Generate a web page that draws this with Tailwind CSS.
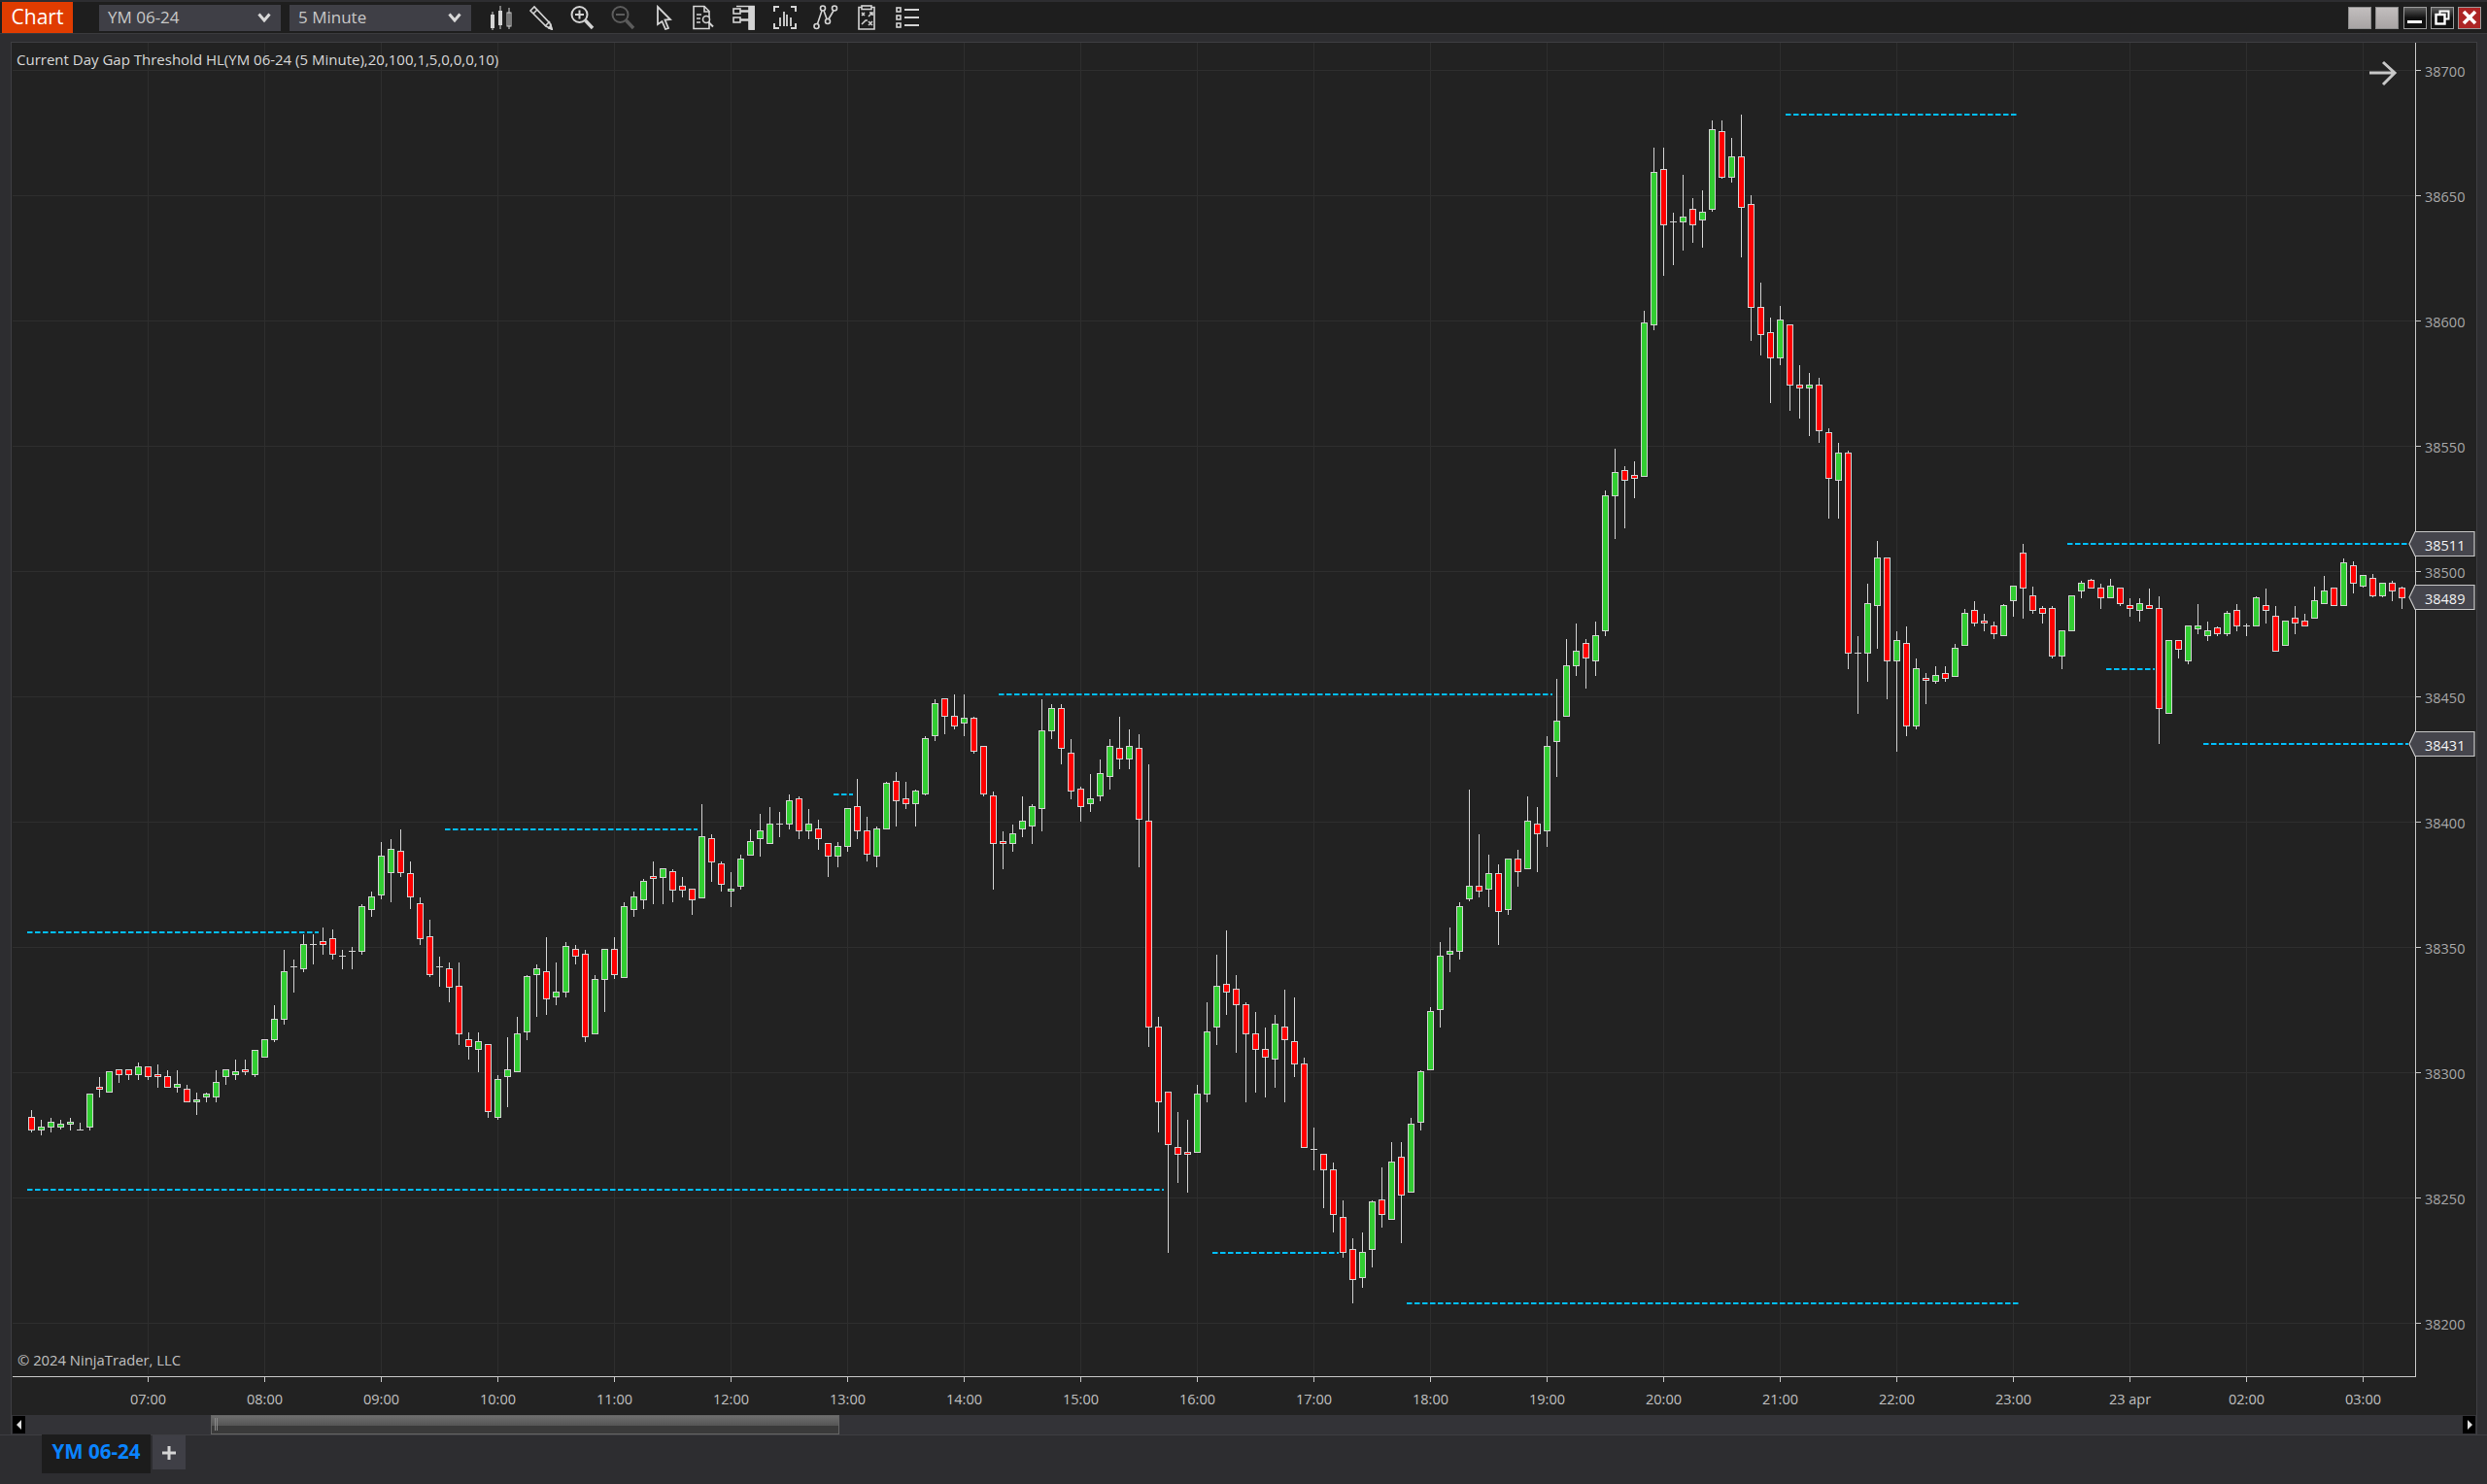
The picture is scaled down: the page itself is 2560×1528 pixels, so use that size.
<!DOCTYPE html>
<html lang="en">
  <head>
    <meta charset="UTF-8" />
    <title>Chart - YM 06-24</title>
    <script src="https://cdn.jsdelivr.net/npm/@tailwindcss/browser@4"></script>
  </head>
  <body class="m-0 p-0 bg-[#2d2d30] overflow-hidden">
    <div class="w-[2560px] h-[1528px] flex flex-col bg-[#2d2d30] font-['Open_Sans',sans-serif] text-[#d4d4d4]">
      <!-- Toolbar -->
      <header class="h-[32px] mt-[2px] bg-[#1e1e1e] flex items-center shrink-0 relative">
        <div class="w-[73px] h-[32px] ml-[2px] bg-[#e03c00] text-white text-[21px] flex items-center justify-center">Chart</div>
        <div class="w-[187px] h-[27px] ml-[27px] bg-[#3f3f46] flex items-center justify-between pl-[9px] pr-[10px] text-[17px] text-[#c8c8c8]">
          <span>YM 06-24</span>
          <svg width="14" height="10" viewBox="0 0 14 10"><path d="M1.5 1.5 L7 8 L12.5 1.5" fill="none" stroke="#d8d8d8" stroke-width="3"/></svg>
        </div>
        <div class="w-[187px] h-[27px] ml-[9px] bg-[#3f3f46] flex items-center justify-between pl-[9px] pr-[10px] text-[17px] text-[#c8c8c8]">
          <span>5 Minute</span>
          <svg width="14" height="10" viewBox="0 0 14 10"><path d="M1.5 1.5 L7 8 L12.5 1.5" fill="none" stroke="#d8d8d8" stroke-width="3"/></svg>
        </div>
        <!-- Chart tool icons -->
        <div class="flex items-center ml-[17px] gap-[15.9px]">
          <!-- bars type -->
          <svg width="26" height="26" viewBox="0 0 26 26" fill="#d4d4d4"><rect x="3" y="10" width="4" height="14"/><rect x="4.5" y="7" width="1" height="19"/><rect x="11" y="6" width="4" height="15"/><rect x="12.5" y="1" width="1" height="24"/><rect x="20" y="8" width="4" height="14" fill="none" stroke="#d4d4d4"/><rect x="21.5" y="3" width="1" height="22"/></svg>
          <!-- pencil -->
          <svg width="26" height="26" viewBox="0 0 26 26" fill="none" stroke="#d4d4d4" stroke-width="1.6"><path d="M2 6 L6 2 L22 19 L24 25 L18 22 Z"/><path d="M5 9 L9 5"/><path d="M17 22 L22 17"/><path d="M21 24 L24 25 L23 21 Z" fill="#d4d4d4"/></svg>
          <!-- zoom in -->
          <svg width="26" height="26" viewBox="0 0 26 26" fill="none" stroke="#d4d4d4"><circle cx="10.5" cy="10" r="8" stroke-width="2"/><path d="M6 10 H15 M10.5 5.5 V14.5" stroke-width="2"/><path d="M16.5 16 L24 24" stroke-width="3.4"/></svg>
          <!-- zoom out, disabled -->
          <svg width="26" height="26" viewBox="0 0 26 26" fill="none" stroke="#5c5c5c"><circle cx="10.5" cy="10" r="8" stroke-width="2"/><path d="M6 10 H15" stroke-width="2"/><path d="M16.5 16 L24 24" stroke-width="3.4"/></svg>
          <!-- cursor -->
          <svg width="26" height="26" viewBox="0 0 26 26" fill="none" stroke="#d4d4d4" stroke-width="1.8"><path d="M7 2 L20 15 L14.5 15.5 L18 24 L15 25 L11.5 17 L7 20 Z"/></svg>
          <!-- data box -->
          <svg width="26" height="26" viewBox="0 0 26 26" fill="none" stroke="#d4d4d4" stroke-width="1.6"><path d="M3 1.5 H14 L19 6.5 V24.5 H3 Z"/><path d="M14 1.5 V7 H19"/><path d="M6 10 H11 M6 14 H10 M6 18 H10" /><circle cx="16" cy="15" r="3.5" fill="#1e1e1e"/><path d="M18.5 18 L23 22.5" stroke-width="2"/></svg>
          <!-- properties -->
          <svg width="26" height="26" viewBox="0 0 26 26" fill="none" stroke="#d4d4d4" stroke-width="1.6"><rect x="2" y="4" width="7" height="5"/><rect x="2" y="13" width="7" height="5"/><path d="M9 6.5 H18 M9 15.5 H18" stroke-width="2.4"/><path d="M5 1.5 H23 V25 H19 V1.5" /><rect x="18" y="2" width="5" height="23" fill="#d4d4d4"/></svg>
          <!-- indicators -->
          <svg width="26" height="26" viewBox="0 0 26 26" fill="none" stroke="#d4d4d4" stroke-width="2"><path d="M7 2 H2 V7 M19 2 H24 V7 M2 19 V24 H7 M24 19 V24 H19"/><path d="M8 13 V22 M12 7 V22 M15 10 V22 M19 13 V22" stroke-width="1.8"/></svg>
          <!-- strategies line -->
          <svg width="26" height="26" viewBox="0 0 26 26" fill="none" stroke="#d4d4d4" stroke-width="1.6"><circle cx="3.5" cy="22" r="2.5"/><circle cx="10" cy="3.5" r="2.5"/><circle cx="15" cy="17" r="2.5"/><circle cx="22" cy="3.5" r="2.5"/><path d="M4.5 19.5 L9 6 M11 6 L14 14.5 M16 14.5 L21 6"/></svg>
          <!-- strategy sheet -->
          <svg width="26" height="26" viewBox="0 0 26 26" fill="none" stroke="#d4d4d4" stroke-width="1.6"><path d="M8 2.5 H5 V25 H21 V2.5 H18"/><rect x="8" y="1" width="10" height="3.5"/><path d="M8 8 L11 11 M11 8 L8 11 M15 12 L19 8 M16 8 H19 V11 M8 20 L12 16 H14 M15 17 L19 21 M19 17 L15 21"/></svg>
          <!-- list -->
          <svg width="26" height="26" viewBox="0 0 26 26" fill="none" stroke="#d4d4d4" stroke-width="1.6"><rect x="2" y="3" width="4" height="4"/><rect x="2" y="11" width="4" height="4"/><rect x="2" y="19" width="4" height="4"/><path d="M10 5 H25 M10 13 H25 M10 21 H25" stroke-width="2.2"/></svg>
        </div>
        <!-- Window buttons -->
        <div class="ml-auto mr-[6px] flex items-center gap-[4.2px]">
          <div class="w-[24px] h-[23px] bg-gradient-to-b from-[#c2bebe] to-[#a8a4a4] border border-[#8c8c8c]"></div>
          <div class="w-[24px] h-[23px] bg-gradient-to-b from-[#c2bebe] to-[#a8a4a4] border border-[#8c8c8c]"></div>
          <div class="w-[24px] h-[23px] bg-gradient-to-b from-[#5c5c5c] via-[#111111] to-[#111111] border border-[#9a9a9a] flex items-end justify-center pb-[5px]"><div class="w-[15px] h-[3px] bg-white"></div></div>
          <div class="w-[24px] h-[23px] bg-gradient-to-b from-[#5c5c5c] via-[#111111] to-[#111111] border border-[#9a9a9a] flex items-center justify-center">
            <svg width="16" height="16" viewBox="0 0 16 16" fill="none" stroke="#fff"><rect x="5.5" y="1.5" width="9" height="8" stroke-width="2"/><rect x="1.5" y="5" width="9" height="9.5" fill="#111" stroke-width="2.4"/></svg>
          </div>
          <div class="w-[24px] h-[23px] bg-[#ad2525] border border-[#9a9a9a] flex items-center justify-center">
            <svg width="16" height="16" viewBox="0 0 16 16" fill="none" stroke="#fff" stroke-width="3.6"><path d="M2 2 L14 14 M14 2 L2 14"/></svg>
          </div>
        </div>
      </header>

      <!-- Chart frame -->
      <main class="h-[1443px] shrink-0 border-t border-[#3a3a3d] pt-[8px] pl-[11px] pr-[10px] flex flex-col">
        <div class="border border-b-0 border-[#3e3e42] flex flex-col w-[2539px] h-[1434px]">
          <svg id="chart" class="block bg-[#222222]" width="2537" height="1413" viewBox="12 44 2537 1413"></svg>
          <!-- Scrollbar -->
          <div class="h-[20px] bg-[#333337] flex items-stretch shrink-0 relative">
            <div class="w-[13px] my-px ml-px bg-black flex items-center justify-center">
              <svg width="6" height="10" viewBox="0 0 6 10"><path d="M5 0 V10 L0 5 Z" fill="#e0e0e0"/></svg>
            </div>
            <div class="ml-[191px] w-[647px] border border-[#666666] bg-[#3a3a3a] flex flex-col relative">
              <div class="h-[10px] bg-gradient-to-b from-[#6e6e6e] to-[#555555]"></div>
              <div class="absolute left-[3px] top-[2px] w-[3px] h-[13px] border-x border-[#8a8a8a]"></div>
            </div>
            <div class="ml-auto w-[13px] my-px mr-px bg-black flex items-center justify-center">
              <svg width="6" height="10" viewBox="0 0 6 10"><path d="M1 0 V10 L6 5 Z" fill="#e0e0e0"/></svg>
            </div>
          </div>
        </div>
      </main>

      <!-- Tabs -->
      <nav class="border-t border-[#3e3e42] h-[50px] shrink-0 flex items-start pl-[43px]">
        <div class="-mt-px w-[112px] h-[40px] pb-[5px] bg-[#1c1c1c] text-[#0a84ff] text-[20.5px] font-bold flex items-center justify-center">YM 06-24</div>
        <div class="ml-[2px] w-[34px] h-[35px] bg-[#3f3f46] flex items-center justify-center">
          <svg width="16" height="16" viewBox="0 0 16 16"><path d="M8 1 V15 M1 8 H15" stroke="#d4d4d4" stroke-width="3"/></svg>
        </div>
      </nav>
    </div>

    <script>
      // hi, body top, body bottom, lo in page pixels; r = down, g = up, d = doji
      const bars = `r 1143 1150 1163 1166|g 1153 1160 1163 1169|g 1151 1155 1160 1166|g 1153 1157 1160 1163|g 1151 1155 1157 1164|d 1156 1163 1163 1164|g 1126 1126 1160 1164|r 1109 1119 1121 1130|g 1103 1103 1124 1124|r 1101 1101 1106 1115|r 1101 1101 1106 1112|g 1094 1098 1106 1112|r 1098 1098 1108 1112|r 1096 1106 1108 1120|r 1102 1108 1119 1119|g 1102 1116 1119 1125|r 1117 1121 1134 1134|g 1125 1132 1134 1148|g 1125 1126 1129 1135|g 1102 1114 1129 1135|g 1101 1101 1108 1117|g 1091 1103 1106 1112|r 1091 1101 1103 1107|g 1081 1081 1106 1109|g 1070 1070 1088 1088|g 1035 1049 1070 1073|g 978 1000 1049 1055|d 988 995 995 1022|g 962 972 997 1001|d 962 972 972 993|r 955 969 972 983|r 957 966 982 988|d 978 984 984 998|d 975 979 979 998|g 931 933 979 983|g 918 923 936 944|g 867 881 921 926|g 864 874 898 929|r 854 876 898 903|r 887 899 923 936|r 924 930 966 973|r 947 964 1003 1006|d 985 995 995 1016|r 991 997 1016 1032|r 991 1015 1064 1076|r 1063 1070 1077 1091|g 1063 1072 1080 1104|r 1075 1075 1144 1151|g 1107 1111 1150 1153|g 1068 1101 1108 1140|g 1047 1064 1103 1103|g 1004 1005 1062 1071|g 993 997 1003 1047|r 965 1000 1028 1045|g 991 1021 1026 1035|g 970 974 1021 1027|r 973 977 984 993|r 978 982 1067 1073|g 1004 1008 1064 1064|g 977 977 1008 1042|r 965 977 1003 1008|g 929 933 1006 1006|g 918 923 936 944|g 905 907 926 936|r 887 902 904 931|g 894 894 903 931|r 895 897 916 929|r 903 912 916 924|r 915 915 926 942|g 828 861 924 924|r 859 863 887 908|r 887 889 910 918|g 898 915 917 934|g 880 884 912 916|g 854 866 880 880|g 838 855 863 882|g 831 848 868 868|d 836 848 848 862|g 818 824 848 854|r 820 822 855 864|g 833 848 855 864|r 844 853 863 875|r 868 868 881 903|g 867 871 881 893|g 832 832 871 877|r 802 830 855 864|r 841 855 879 887|g 851 853 881 893|g 805 806 853 853|r 795 804 824 851|r 805 822 827 833|g 813 814 827 851|g 758 760 817 819|g 720 724 757 763|r 719 719 737 756|r 715 737 747 751|g 715 739 744 758|r 738 739 773 776|r 768 768 817 820|r 815 819 868 916|r 856 866 868 895|g 849 858 868 877|g 820 845 853 862|g 828 830 850 869|g 720 752 832 856|g 725 729 752 761|r 725 729 770 787|r 761 775 814 823|r 810 812 830 846|g 797 822 827 836|g 782 796 819 825|g 761 768 799 813|r 738 770 781 792|g 751 768 781 792|r 756 770 843 893|r 787 845 1057 1078|r 1047 1057 1134 1166|r 1124 1124 1178 1290|r 1145 1181 1188 1218|r 1153 1186 1188 1228|g 1117 1126 1186 1186|g 1032 1062 1126 1135|g 983 1015 1057 1076|r 958 1013 1021 1045|r 1004 1018 1034 1084|r 1032 1034 1064 1135|r 1042 1064 1080 1125|r 1058 1080 1088 1130|g 1045 1054 1090 1120|r 1019 1057 1070 1135|r 1027 1072 1095 1109|r 1089 1095 1181 1181|d 1161 1183 1183 1205|r 1188 1188 1204 1244|r 1197 1204 1250 1269|r 1236 1253 1289 1295|r 1275 1286 1317 1342|g 1269 1289 1315 1326|g 1236 1237 1286 1305|r 1202 1235 1250 1264|g 1176 1196 1255 1255|r 1176 1191 1230 1280|g 1151 1157 1227 1227|g 1102 1103 1155 1164|g 1037 1041 1101 1101|g 970 984 1039 1058|g 955 979 982 1001|g 929 933 979 988|g 813 912 925 928|r 859 912 917 924|g 880 899 915 934|r 890 899 938 973|g 884 884 936 942|r 875 884 897 913|g 820 845 894 894|r 831 848 858 898|g 758 768 855 872|g 699 742 763 800|g 658 685 737 737|g 642 670 685 696|r 658 662 677 709|g 640 654 680 696|g 505 510 649 655|g 462 486 510 555|r 480 484 494 544|r 475 489 492 513|g 320 332 490 490|g 152 177 334 340|r 152 174 231 284|d 219 228 228 273|g 180 223 228 258|r 204 215 231 250|g 196 218 226 255|g 124 133 215 218|r 124 135 182 184|g 142 161 182 188|r 118 161 213 265|r 201 210 316 351|r 291 316 344 366|r 327 342 368 415|g 315 329 368 376|r 334 334 396 423|r 376 396 399 431|g 384 396 399 449|r 389 396 443 456|r 441 445 492 534|g 456 466 494 534|r 464 466 672 689|d 655 672 672 735|g 601 621 672 702|g 557 574 623 668|r 574 574 680 720|g 650 659 680 774|r 645 662 747 758|g 678 688 747 751|r 693 698 698 725|g 686 695 701 704|r 686 693 698 702|g 663 667 696 696|g 627 631 664 664|r 619 628 641 645|r 632 639 641 650|r 640 644 652 658|g 622 623 654 654|g 603 603 618 635|r 560 569 605 637|r 604 613 628 632|r 624 626 631 642|r 624 626 675 678|g 649 649 675 689|g 613 613 649 649|g 598 600 608 616|r 596 597 605 605|r 601 605 615 627|g 596 603 615 615|r 605 605 621 624|r 616 623 626 635|g 616 621 628 640|r 606 623 626 626|r 614 626 729 766|g 659 659 734 734|r 659 659 668 678|g 644 644 680 684|g 622 644 647 653|g 640 649 654 660|r 645 646 652 655|g 629 631 652 655|r 622 628 644 650|d 642 644 644 655|g 614 615 644 644|r 606 623 628 642|r 624 634 670 670|g 639 639 664 664|r 624 636 641 653|r 632 639 644 644|g 604 618 636 636|g 593 608 621 621|r 605 605 623 623|g 575 579 623 623|r 578 582 600 611|g 592 592 603 605|r 591 595 613 615|g 600 600 613 615|r 598 600 608 619|r 604 605 615 627`.split('|');

      // dashed threshold lines: y, x1, x2
      const gaps = [[960,28,328],[1225,28,1198],[854,458,718],[818,858,878],[715,1028,1598],[1290,1248,1378],[1342,1448,2078],[118,1838,2078],[560,2128,2479],[689,2168,2218],[766,2268,2479]];
      const hours = ['07:00','08:00','09:00','10:00','11:00','12:00','13:00','14:00','15:00','16:00','17:00','18:00','19:00','20:00','21:00','22:00','23:00','23 apr','02:00','03:00'];
      const prices = [38700,38650,38600,38550,38500,38450,38400,38350,38300,38250,38200];
      const tags = [[560,'38511'],[615,'38489'],[766,'38431']];
      const axis = '#c8c8c8', grid = '#2e2e2e', ink = '#d2d2d2';
      const font = 'font-family="Open Sans, sans-serif"';
      let s = '';

      // grid
      hours.forEach((h, i) => {
        const x = 152.5 + 120 * i;
        s += `<line x1="${x}" x2="${x}" y1="44" y2="1415" stroke="${grid}"/>`;
      });
      prices.forEach((p, i) => {
        const y = 72.5 + 129 * i;
        s += `<line x1="13" x2="2486" y1="${y}" y2="${y}" stroke="${grid}"/>`;
      });

      // dashed lines under the candles
      gaps.forEach(([y, a, b]) => {
        s += `<line x1="${a}" x2="${b}" y1="${y}" y2="${y}" stroke="#00bfff" stroke-width="2" stroke-dasharray="5.5 2.5"/>`;
      });

      // candles
      bars.forEach((b, n) => {
        const [c, hi, top, bot, lo] = b.split(' ').map((v, i) => i ? +v : v);
        const x = 32.5 + 10 * n;
        if (lo > hi) s += `<line x1="${x}" x2="${x}" y1="${hi}" y2="${lo}" stroke="${ink}"/>`;
        if (c === 'd') {
          s += `<line x1="${x - 3.5}" x2="${x + 3.5}" y1="${top + .5}" y2="${top + .5}" stroke="${ink}"/>`;
        } else {
          s += `<rect x="${x - 3}" y="${top + .5}" width="6" height="${Math.max(bot - top, 2)}" fill="${c === 'r' ? '#ff0000' : '#32cd32'}" stroke="${ink}"/>`;
        }
      });

      // axes
      s += `<line x1="2486.5" x2="2486.5" y1="44" y2="1418" stroke="${axis}"/>`;
      s += `<line x1="13" x2="2487" y1="1417.5" y2="1417.5" stroke="${axis}" stroke-width="1.2"/>`;
      hours.forEach((h, i) => {
        const x = 152.5 + 120 * i;
        s += `<line x1="${x}" x2="${x}" y1="1418" y2="1423" stroke="${axis}"/>`;
        s += `<text x="${x}" y="1446" text-anchor="middle" fill="#c0c0c0" font-size="14.5" ${font}>${h}</text>`;
      });
      prices.forEach((p, i) => {
        const y = 72.5 + 129 * i;
        s += `<line x1="2487" x2="2492" y1="${y}" y2="${y}" stroke="${axis}"/>`;
        s += `<text x="2496" y="${y + 6}" fill="#a8a8a8" font-size="14.5" ${font}>${p}</text>`;
      });
      tags.forEach(([y, t]) => {
        s += `<path d="M2480 ${y} L2486 ${y - 12.5} H2547 V${y + 12.5} H2486 Z" fill="#45454c" stroke="${axis}" stroke-width="1.2"/>`;
        s += `<text x="2496" y="${y + 7}" fill="#f2f2f2" font-size="14.5" ${font}>${t}</text>`;
      });

      // overlays
      s += `<text x="17" y="67" fill="#d8d8d8" font-size="15" ${font}>Current Day Gap Threshold HL(YM 06-24 (5 Minute),20,100,1,5,0,0,0,10)</text>`;
      s += `<text x="18" y="1406" fill="#c0c0c0" font-size="14.8" ${font}>© 2024 NinjaTrader, LLC</text>`;
      s += `<path d="M2439 75 H2465 M2453 64 L2465 75 L2453 87" fill="none" stroke="#c8c8c8" stroke-width="3"/>`;
      document.getElementById('chart').innerHTML = s;
    </script>
  </body>
</html>
